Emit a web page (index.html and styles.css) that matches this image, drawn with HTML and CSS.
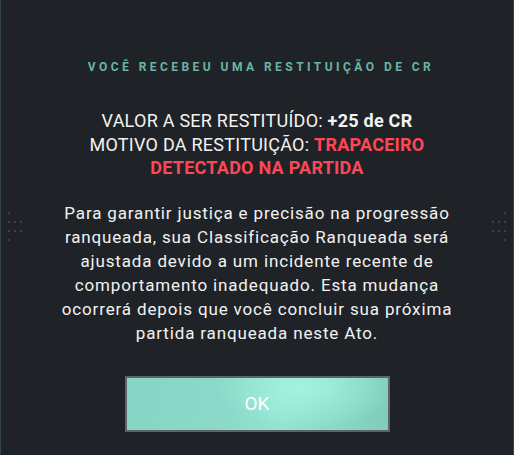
FILE: index.html
```
<!DOCTYPE html>
<html lang="pt">
<head>
<meta charset="utf-8">
<link rel="stylesheet" href="styles.css">
</head>
<body>
<div class="screen">
  <div class="dots dots-left">
    <span class="d r1"></span>
    <span class="row"><span class="d"></span><span class="d"></span><span class="d"></span></span>
    <span class="row"><span class="d"></span><span class="d"></span><span class="d"></span></span>
    <span class="d r1"></span>
  </div>
  <div class="dots dots-right">
    <span class="d r1"></span>
    <span class="row"><span class="d"></span><span class="d"></span><span class="d"></span></span>
    <span class="row"><span class="d"></span><span class="d"></span><span class="d"></span></span>
    <span class="d r1"></span>
  </div>
  <div class="content">
    <h1 class="title">VOCÊ RECEBEU UMA RESTITUIÇÃO DE CR</h1>
    <p class="info">VALOR A SER RESTITUÍDO: <b>+25 de CR</b><br>MOTIVO DA RESTITUIÇÃO: <b class="red">TRAPACEIRO<br>DETECTADO NA PARTIDA</b></p>
    <p class="body">Para garantir justiça e precisão na progressão<br>ranqueada, sua Classificação Ranqueada será<br>ajustada devido a um incidente recente de<br>comportamento inadequado. Esta mudança<br>ocorrerá depois que você concluir sua próxima<br>partida ranqueada neste Ato.</p>
    <button class="ok">OK</button>
  </div>
</div>
</body>
</html>
```
FILE: styles.css
```
html, body { margin: 0; padding: 0; }
body { background: #1f2328; width: 514px; height: 455px; overflow: hidden; }
.screen {
  position: relative;
  width: 514px; height: 455px;
  box-sizing: border-box;
  border-left: 1px solid #33444a;
  border-right: 1px solid #33444a;
  background: #1f2328;
  font-family: "Roboto", "Liberation Sans", sans-serif;
  color: #f2f2f0;
}
.content {
  display: flex; flex-direction: column; align-items: center;
  padding-top: 59px;
  text-align: center;
}
.title {
  margin: 0;
  font-size: 12px;
  font-weight: 700;
  letter-spacing: 3.45px;
  color: #6cb4a4;
  line-height: 16px;
  padding-left: 8px;
}
.info {
  margin: 34px 0 0;
  font-size: 18px;
  line-height: 23.5px;
  letter-spacing: 0.25px;
  white-space: nowrap;
}
.info b { font-weight: 700; }
.info .red { color: #ff4655; }
.body {
  margin: 21px 0 0;
  font-size: 17px;
  line-height: 24px;
  letter-spacing: 0.85px;
  white-space: nowrap;
}
.ok {
  margin-top: 31px;
  width: 265px; height: 56px;
  box-sizing: border-box;
  border: 2px solid #5d6467;
  background:
    radial-gradient(ellipse 90px 40px at 68% 20%, rgba(170, 250, 232, 0.7), rgba(170, 250, 232, 0) 100%),
    linear-gradient(100deg, #86d5c4 0%, #8cd9c9 40%, #94e4d3 60%, #8ad9c8 80%, #80cbbb 100%);
  color: #ffffff;
  font-family: inherit;
  font-size: 19px;
  padding: 0;
}
.dots { position: absolute; top: 212px; display: flex; flex-direction: column; gap: 7px; }
.dots-left { left: 7px; align-items: flex-start; }
.dots-right { right: 7px; align-items: flex-end; }
.row { display: flex; gap: 4px; }
.d { display: block; width: 2px; height: 2px; background: #3a4247; }
```
